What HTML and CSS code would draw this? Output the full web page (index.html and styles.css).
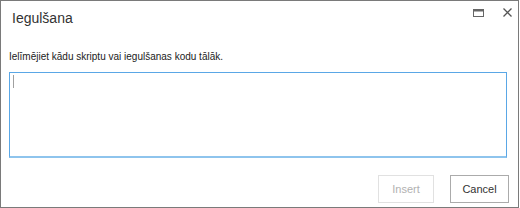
FILE: index.html
```html
<!DOCTYPE html>
<html lang="lv">
<head>
  <meta charset="UTF-8">
  <title>Iegulšana</title>
  <link rel="stylesheet" href="styles.css">
</head>
<body>

<div class="dialog">
  <div class="title-bar">
    <h1 class="title">Iegulšana</h1>
    <div class="window-buttons">
      <button class="icon-button" title="Maksimizēt">
        <svg width="11" height="8" viewBox="0 0 11 8"><rect x="0.5" y="0.5" width="10" height="7" fill="none" stroke="#666"/><line x1="0" y1="1.5" x2="11" y2="1.5" stroke="#666" stroke-width="2"/></svg>
      </button>
      <button class="icon-button" title="Aizvērt">
        <svg width="9" height="9" viewBox="0 0 9 9"><path d="M0.5 0.5 L8.5 8.5 M8.5 0.5 L0.5 8.5" stroke="#555" stroke-width="1.3"/></svg>
      </button>
    </div>
  </div>

  <div class="content">
    <label class="label" for="embed">Ielīmējiet kādu skriptu vai iegulšanas kodu tālāk.</label>
    <div class="code-wrap">
      <textarea class="code-box" id="embed"></textarea>
      <span class="caret"></span>
    </div>
  </div>

  <div class="footer">
    <button class="btn btn-insert" disabled>Insert</button>
    <button class="btn btn-cancel">Cancel</button>
  </div>
</div>

</body>
</html>
```

FILE: styles.css
```css
body {
  margin: 0;
  padding: 0;
  background: #fff;
  font-family: "Liberation Sans", Arial, sans-serif;
  color: #262626;
}

.dialog {
  box-sizing: border-box;
  width: 519px;
  height: 208px;
  border: 1px solid #7a7a7a;
  background: #fff;
  display: flex;
  flex-direction: column;
}

.title-bar {
  display: flex;
  justify-content: space-between;
  align-items: flex-start;
  height: 40px;
}

.title {
  margin: 8px 0 0 11px;
  font-size: 14px;
  font-weight: normal;
  color: #333;
  line-height: 18px;
}

.window-buttons {
  display: flex;
  align-items: center;
  gap: 19px;
  margin: 7px 6px 0 0;
}

.icon-button {
  border: none;
  background: none;
  padding: 0;
  display: flex;
  align-items: center;
  justify-content: center;
  height: 9px;
}

.content {
  padding: 9px 12px 0 8px;
}

.label {
  display: block;
  font-size: 10px;
  color: #222;
  line-height: 14px;
  margin-bottom: 8px;
}

.code-wrap {
  position: relative;
}

.code-box {
  display: block;
  box-sizing: border-box;
  width: 498px;
  height: 86px;
  border: 1px solid #5aa7e6;
  border-bottom: 2px solid #8ec4ed;
  resize: none;
  outline: none;
  margin: 0;
}

.caret {
  position: absolute;
  left: 4px;
  top: 3px;
  width: 1px;
  height: 13px;
  background: #a0a0a0;
}

.footer {
  display: flex;
  justify-content: flex-end;
  gap: 16px;
  margin-top: auto;
  padding: 0 9px 4px 0;
}

.btn {
  box-sizing: border-box;
  height: 28px;
  padding: 0;
  font-family: "Liberation Sans", Arial, sans-serif;
  font-size: 11px;
  color: #333;
  background: #fff;
  border: 1px solid #ababab;
}

.btn-insert {
  width: 56px;
}

.btn-cancel {
  width: 59px;
}

.btn:disabled {
  color: #b1b1b1;
  border-color: #e1e1e1;
}
```
